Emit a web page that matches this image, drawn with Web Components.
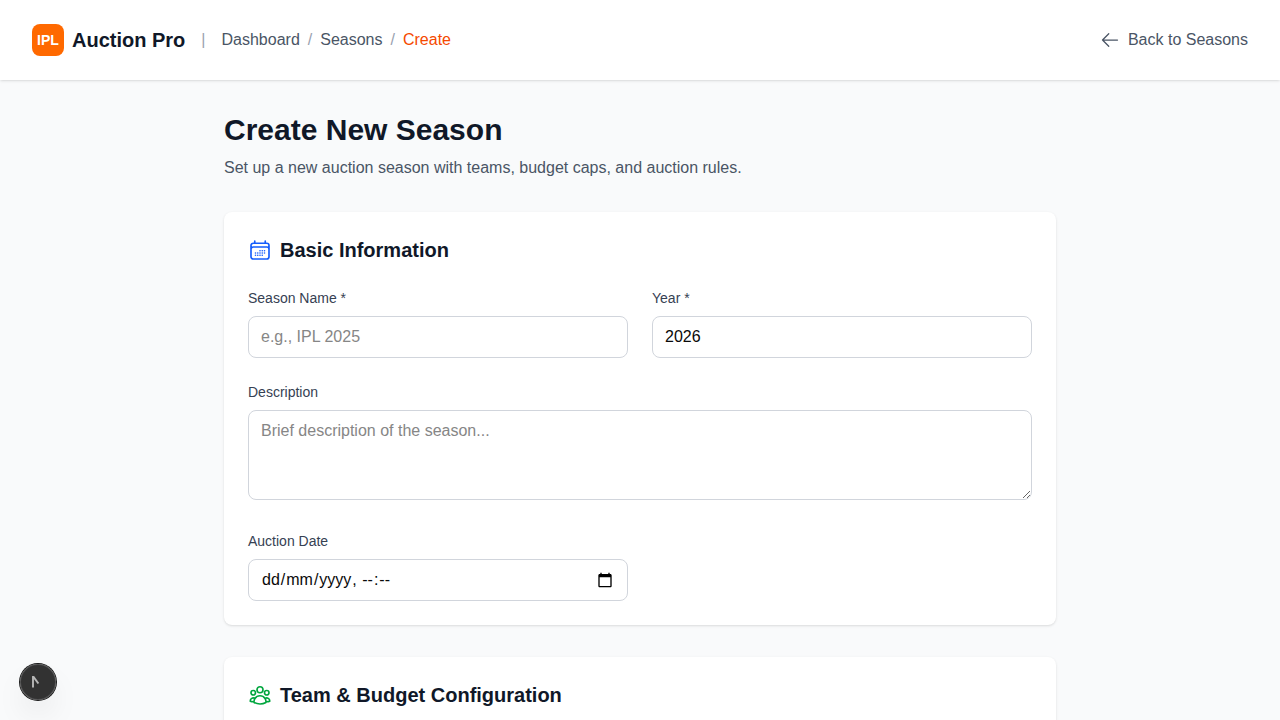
<!DOCTYPE html>
<html lang="en">
<head>
<meta charset="utf-8">
<title>Create New Season</title>
<style>
html, body { margin: 0; height: 100%; overflow: hidden; }
body { background: #f9fafb; color: #101828; font: 16px/24px "Liberation Sans", Arial, sans-serif; }
</style>
</head>
<body>
<season-page></season-page>
<script>
const ICONS = {
  arrow: 'M10.5 19.5 3 12m0 0 7.5-7.5M3 12h18',
  calendar: 'M6.75 3v2.25M17.25 3v2.25M3 18.75V7.5a2.25 2.25 0 0 1 2.25-2.25h13.5A2.25 2.25 0 0 1 21 7.5v11.25m-18 0A2.25 2.25 0 0 0 5.25 21h13.5A2.25 2.25 0 0 0 21 18.75m-18 0v-7.5A2.25 2.25 0 0 1 5.25 9h13.5A2.25 2.25 0 0 1 21 11.25v7.5m-9-6h.008v.008H12v-.008ZM12 15h.008v.008H12V15Zm0 2.25h.008v.008H12v-.008ZM9.75 15h.008v.008H9.75V15Zm0 2.25h.008v.008H9.75v-.008ZM7.5 15h.008v.008H7.5V15Zm0 2.25h.008v.008H7.5v-.008Zm6.75-4.5h.008v.008h-.008v-.008Zm0 2.25h.008v.008h-.008V15Zm0 2.25h.008v.008h-.008v-.008Zm2.25-4.5h.008v.008H16.5v-.008Zm0 2.25h.008v.008H16.5V15Z',
  group: 'M18 18.72a9.094 9.094 0 0 0 3.741-.479 3 3 0 0 0-4.682-2.72m.94 3.198.001.031c0 .225-.012.447-.037.666A11.944 11.944 0 0 1 12 21c-2.17 0-4.207-.576-5.963-1.584A6.062 6.062 0 0 1 6 18.719m12 0a5.971 5.971 0 0 0-.941-3.197m0 0A5.995 5.995 0 0 0 12 12.75a5.995 5.995 0 0 0-5.058 2.772m0 0a3 3 0 0 0-4.681 2.72 8.986 8.986 0 0 0 3.74.477m.94-3.197a5.971 5.971 0 0 0-.94 3.197M15 6.75a3 3 0 1 1-6 0 3 3 0 0 1 6 0Zm6 3a2.25 2.25 0 1 1-4.5 0 2.25 2.25 0 0 1 4.5 0Zm-13.5 0a2.25 2.25 0 1 1-4.5 0 2.25 2.25 0 0 1 4.5 0Z'
};

function define(name, render) {
  customElements.define(name, class extends HTMLElement {
    constructor() {
      super();
      this.attachShadow({ mode: 'open' });
    }
    connectedCallback() {
      this.shadowRoot.innerHTML = render(this);
    }
  });
}

define('line-icon', el => `
  <style>
    :host { display: block; flex: none; width: 24px; height: 24px; }
    svg { display: block; width: 100%; height: 100%; }
  </style>
  <svg viewBox="0 0 24 24" fill="none" stroke="currentColor" stroke-width="${el.getAttribute('weight') || 1.5}" stroke-linecap="round" stroke-linejoin="round"><path d="${ICONS[el.getAttribute('name')]}"/></svg>`);

define('app-header', () => `
  <style>
    :host { display: flex; align-items: center; justify-content: space-between; height: 80px; padding: 0 32px; box-sizing: border-box; background: #fff; box-shadow: 0 1px 3px rgba(0,0,0,.1), 0 1px 2px -1px rgba(0,0,0,.1); color: #4a5565; }
    .left, .brand, nav, .back { display: flex; align-items: center; }
    .left { gap: 16px; }
    .brand { gap: 8px; font-size: 20px; line-height: 28px; font-weight: 700; color: #101828; }
    .mark { display: grid; place-items: center; width: 32px; height: 32px; border-radius: 8px; background: #ff6900; color: #fff; font-size: 14px; line-height: 20px; }
    nav, .back { gap: 8px; }
    .sep { color: #99a1af; }
    .current { color: #f54900; }
    line-icon { width: 20px; height: 20px; }
  </style>
  <div class="left">
    <div class="brand"><span class="mark">IPL</span><span>Auction Pro</span></div>
    <span class="sep">|</span>
    <nav><span>Dashboard</span><span class="sep">/</span><span>Seasons</span><span class="sep">/</span><span class="current">Create</span></nav>
  </div>
  <div class="back"><line-icon name="arrow"></line-icon><span>Back to Seasons</span></div>`);

define('form-card', el => `
  <style>
    :host { display: block; padding: 24px; border-radius: 8px; background: #fff; box-shadow: 0 1px 3px rgba(0,0,0,.1), 0 1px 2px -1px rgba(0,0,0,.1); }
    header { display: flex; align-items: center; gap: 8px; height: 28px; margin-bottom: 24px; }
    h2 { margin: 0; font-size: 20px; line-height: 28px; font-weight: 700; }
    line-icon { color: ${el.getAttribute('tint')}; }
  </style>
  <header><line-icon weight="1.65" name="${el.getAttribute('icon')}"></line-icon><h2>${el.getAttribute('heading').replace('&', '&amp;')}</h2></header>
  <slot></slot>`);

define('form-field', el => {
  const type = el.getAttribute('type');
  const hint = el.getAttribute('placeholder') || '';
  const control = type === 'textarea'
    ? `<textarea class="box" rows="3" placeholder="${hint}"></textarea>`
    : type === 'datetime'
    ? `<div class="box date"><span class="parts"><i>dd</i>/<i>mm</i>/<i>yyyy</i>, <i>--</i>:<i>--</i></span>
       <svg width="16" height="16" viewBox="0 0 24 24"><path d="M20 3h-1V1h-2v2H7V1H5v2H4c-1.100 0-2 .9-2 2v16c0 1.100.9 2 2 2h16c1.100 0 2-.9 2-2V5c0-1.100-.9-2-2-2zm0 18H4V8h16v13z"/></svg></div>`
    : `<input class="box" placeholder="${hint}" value="${el.getAttribute('value') || ''}">`;
  return `
  <style>
    :host { display: block; }
    label { display: block; margin-bottom: 8px; font-size: 14px; line-height: 20px; color: #364153; }
    .box { display: block; box-sizing: border-box; width: 100%; height: 42px; margin: 0; padding: 8px 12px; border: 1px solid #d1d5dc; border-radius: 8px; background: transparent; color: #0a0a0a; font: inherit; outline: none; }
    .box::placeholder { color: #868686; opacity: 1; }
    textarea.box { height: 90px; margin-bottom: 7px; }
    .date { display: flex; align-items: center; justify-content: space-between; padding-right: 14px; }
    .parts { white-space: pre; }
    i { font-style: normal; padding: 0 1px; }
  </style>
  <label>${el.getAttribute('label')}</label>${control}`;
});

define('dev-badge', () => `
  <style>
    :host { position: fixed; left: 20px; bottom: 20px; display: grid; place-items: center; width: 36px; height: 36px; border-radius: 50%; background: rgba(0,0,0,.8); box-shadow: 0 0 0 1px #171717, inset 0 0 0 1px rgba(255,255,255,.14), 0 16px 32px -8px rgba(0,0,0,.18); }
    svg { display: block; }
  </style>
  <svg width="36" height="36" viewBox="0 0 36 36" fill="none"><path d="M13 23.500V12" stroke="#b8b8b8" stroke-width="1.900"/><path d="M13.300 12.600l5.100 6.900" stroke="#b8b8b8" stroke-width="1.900"/></svg>`);

define('season-page', () => `
  <style>
    :host { display: block; height: 720px; overflow: hidden; }
    main { width: 832px; margin: 0 auto; padding-top: 32px; }
    h1 { margin: 0 0 8px; font-size: 30px; line-height: 36px; font-weight: 700; }
    p { margin: 0 0 32px; color: #4a5565; }
    form-card { margin-bottom: 32px; }
    .grid { display: grid; grid-template-columns: 1fr 1fr; gap: 24px; }
    .wide { grid-column: 1 / -1; }
  </style>
  <app-header></app-header>
  <main>
    <h1>Create New Season</h1>
    <p>Set up a new auction season with teams, budget caps, and auction rules.</p>
    <form-card icon="calendar" tint="#155dfc" heading="Basic Information">
      <div class="grid">
        <form-field label="Season Name *" placeholder="e.g., IPL 2025"></form-field>
        <form-field label="Year *" value="2026"></form-field>
        <form-field class="wide" type="textarea" label="Description" placeholder="Brief description of the season..."></form-field>
        <form-field type="datetime" label="Auction Date"></form-field>
      </div>
    </form-card>
    <form-card icon="group" tint="#00a63e" heading="Team &amp; Budget Configuration"></form-card>
  </main>
  <dev-badge></dev-badge>`);
</script>
</body>
</html>
